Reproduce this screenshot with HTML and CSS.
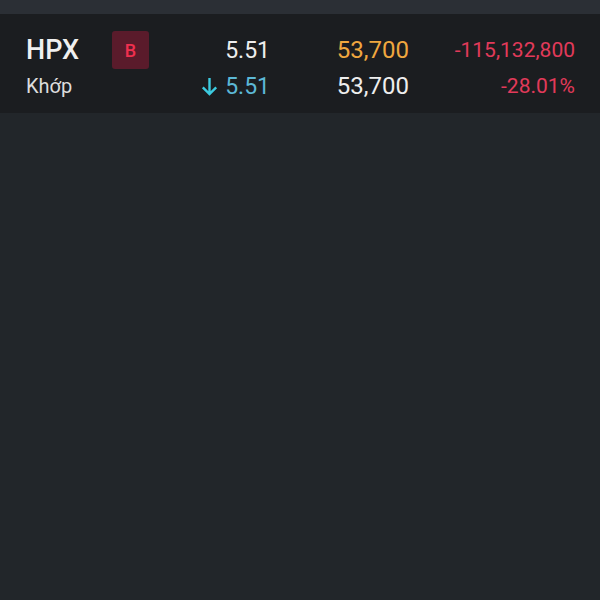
FILE: index.html
```html
<!DOCTYPE html>
<html lang="vi">
<head>
    <meta charset="UTF-8">
    <meta name="viewport" content="width=device-width, initial-scale=1.0">
    <title>HPX</title>
    <link rel="stylesheet" href="styles.css">
</head>
<body>
    <div class="topbar"></div>
    <div class="row">
        <div class="cell name">HPX</div>
        <div class="cell"><span class="badge">B</span></div>
        <div class="cell num price">5.51</div>
        <div class="cell num vol">53,700</div>
        <div class="cell num value">-115,132,800</div>

        <div class="cell sub">Khớp</div>
        <div class="cell"></div>
        <div class="cell num match"><span class="arrow">
            <svg width="17" height="19" viewBox="0 0 17 19"><path d="M8.5 1v16M1.8 10.3 8.5 17l6.7-6.7" fill="none" stroke="#3ccbe0" stroke-width="2.4"/></svg>
        </span>5.51</div>
        <div class="cell num vol2">53,700</div>
        <div class="cell num pct">-28.01%</div>
    </div>
</body>
</html>
```
FILE: styles.css
```css
body {
    margin: 0;
    padding: 0;
    background-color: #22262a;
    font-family: Roboto, "Noto Sans", sans-serif;
    color: #e8e8e8;
}
.topbar {
    height: 14px;
    background-color: #2b2f35;
}
.row {
    display: grid;
    grid-template-columns: 86px 38px 120px 139px 166px;
    grid-template-rows: 48px 24px;
    align-items: center;
    padding: 12px 25px 15px 26px;
    background-color: #1b1d20;
}
.cell {
    white-space: nowrap;
}
.num {
    text-align: right;
}
.name {
    font-size: 27px;
    font-weight: 500;
    color: #f0f0f0;
}
.badge {
    display: flex;
    align-items: center;
    justify-content: center;
    width: 37px;
    height: 38px;
    border-radius: 3px;
    background-color: #5a1b2b;
    color: #f0304f;
    font-size: 18px;
    font-weight: 500;
}
.price {
    font-size: 23px;
    color: #eeeeee;
}
.vol {
    font-size: 24px;
    color: #f0a73f;
}
.value {
    font-size: 21px;
    color: #e23a5a;
}
.sub {
    font-size: 20px;
    color: #dcdcdc;
}
.match {
    font-size: 23px;
    color: #5cb8d6;
    display: flex;
    justify-content: flex-end;
    align-items: center;
}
.arrow {
    display: flex;
    margin-right: 7px;
}
.vol2 {
    font-size: 24px;
    color: #eeeeee;
}
.pct {
    font-size: 21px;
    color: #e23a5a;
}
```
